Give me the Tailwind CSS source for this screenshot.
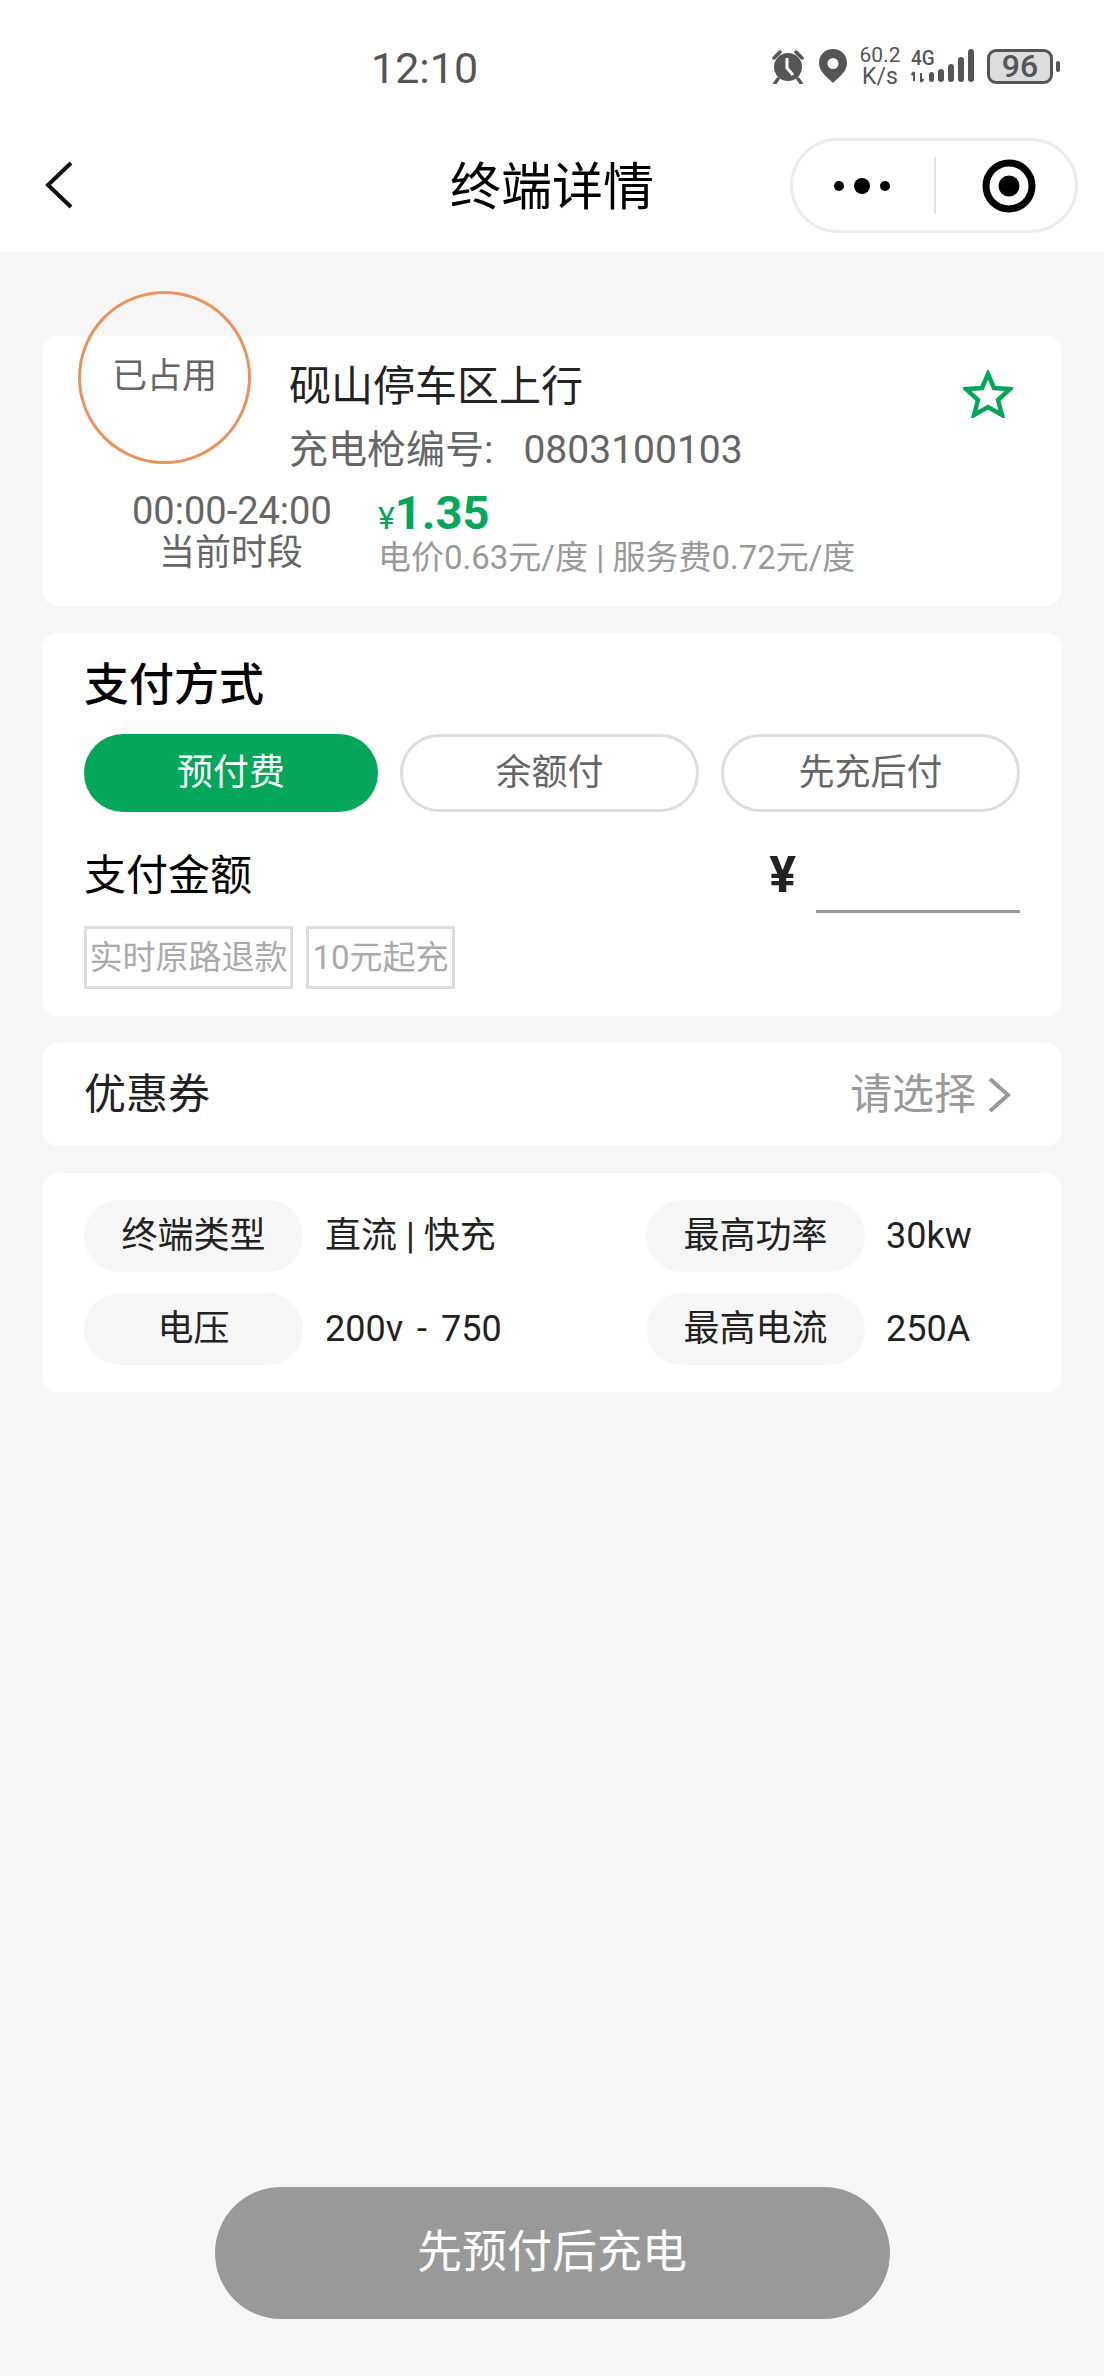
<!DOCTYPE html>
<html lang="zh-CN">
<head>
  <meta charset="UTF-8">
  <meta name="viewport" content="width=device-width, initial-scale=1.0">
  <title>终端详情</title>
  <script src="https://cdn.jsdelivr.net/npm/@tailwindcss/browser@4"></script>
</head>
<body class="bg-[#f6f6f6] font-['Roboto','Noto_Sans_CJK_SC',sans-serif] w-[1104px] h-[2376px] flex flex-col overflow-hidden">
  <!-- header -->
  <header class="bg-white h-[252px] shrink-0">
    <div class="h-[138px] flex items-start pt-[46px]">
      <div class="ml-[371px] text-[43px] leading-[44px] text-[#555]">12:10</div>
      <div class="ml-auto mr-[44px] flex items-center text-[#555] h-[40px]">
        <svg class="w-[36px] h-[36px]" viewBox="0 0 36 36" fill="#555">
          <circle cx="18" cy="19" r="14"/>
          <path d="M4 10 L10 4 M32 10 L26 4 M8 31 L5 35 M28 31 L31 35" stroke="#555" stroke-width="3.5" stroke-linecap="round"/>
          <path d="M17 10 V20 L23 27" stroke="#fff" stroke-width="3" fill="none"/>
        </svg>
        <svg class="w-[28px] h-[34px] ml-[13px]" viewBox="0 0 28 34" fill="#555">
          <path fill-rule="evenodd" d="M14 0 C6 0 0 6 0 14 C0 23 9 29 14 34 C19 29 28 23 28 14 C28 6 22 0 14 0 Z M14 9 A5.5 5.5 0 1 1 14 20 A5.5 5.5 0 1 1 14 9 Z"/>
        </svg>
        <div class="ml-[11px] w-[44px] flex flex-col items-center font-['Roboto',sans-serif]">
          <span class="text-[21px] leading-[21px]">60.2</span>
          <span class="text-[23px] leading-[21px]">K/s</span>
        </div>
        <div class="relative ml-[9px] w-[64px] h-[36px]">
          <svg class="w-[64px] h-[36px]" viewBox="0 0 64 36" fill="#555">
            <rect x="18" y="24" width="5" height="10" rx="2.5"/>
            <rect x="27" y="21" width="6" height="13" rx="3"/>
            <rect x="37" y="16" width="6" height="18" rx="3"/>
            <rect x="47" y="9" width="6" height="25" rx="3"/>
            <rect x="57" y="1" width="6" height="33" rx="3"/>
            <path d="M3 24 V33 M3 24 L0.5 27 M10 34 V25 M10 34 L12.5 31" stroke="#555" stroke-width="2" fill="none"/>
          </svg>
          <span class="absolute left-0 top-0 text-[21px] leading-[20px] font-medium scale-x-90 origin-left">4G</span>
        </div>
        <div class="ml-[12px] w-[66px] h-[35px] rounded-[9px] border-[3px] border-[#555] bg-[#dcdcdc] flex items-center justify-center text-[32px] leading-none font-medium">96</div>
        <div class="ml-[3px] w-[4px] h-[11px] rounded-full bg-[#555]"></div>
      </div>
    </div>
    <div class="h-[114px] grid grid-cols-[1fr_auto_1fr] items-start">
      <div class="pl-[44px] pt-[23px]">
        <svg class="w-[30px] h-[48px]" viewBox="0 0 30 48" fill="none" stroke="#111" stroke-width="4">
          <path d="M27 2 L4 24 L27 46"/>
        </svg>
      </div>
      <h1 class="text-[51px] leading-[100px] text-black">终端详情</h1>
      <div class="flex justify-end pr-[26px]">
        <div class="w-[288px] h-[95px] rounded-full border-[3px] border-[#ebebeb] flex items-center">
          <svg class="ml-[40px] w-[58px] h-[20px]" viewBox="0 0 58 20" fill="#000">
            <circle cx="6" cy="10" r="5"/><circle cx="29" cy="10" r="8"/><circle cx="52" cy="10" r="5"/>
          </svg>
          <div class="ml-[43px] w-[2px] h-[57px] bg-[#e2e2e2]"></div>
          <svg class="ml-[46px] w-[54px] h-[54px]" viewBox="0 0 54 54">
            <circle cx="27" cy="27" r="23" fill="none" stroke="#000" stroke-width="7"/>
            <circle cx="27" cy="27" r="10.5" fill="#000"/>
          </svg>
        </div>
      </div>
    </div>
  </header>

  <main class="px-[42px] pt-[84px] flex flex-col gap-[27px]">
    <!-- station card -->
    <section class="relative h-[270px] bg-white rounded-[16px]">
      <div class="absolute left-[36px] -top-[45px] w-[173px] h-[173px] rounded-full border-[3px] border-[#e8925c] flex items-center justify-center text-[35px] text-[#666]">已占用</div>
      <div class="flex justify-between pl-[247px] pt-[26px] pr-[49px]">
        <div>
          <div class="text-[42px] leading-[50px] text-[#222]">砚山停车区上行</div>
          <div class="mt-[13px] text-[39px] leading-[50px] text-[#666]">充电枪编号:<span class="ml-[30px]">0803100103</span></div>
        </div>
        <svg class="mt-[8px] w-[50px] h-[48px]" viewBox="0 0 50 48" fill="none" stroke="#04a65a" stroke-width="4.5" stroke-linejoin="miter">
          <path d="M25 4 L31 18 L47 19 L35 30 L39 45 L25 37 L11 45 L15 30 L3 19 L19 18 Z"/>
        </svg>
      </div>
      <div class="mt-[15px] flex pl-[90px]">
        <div class="w-[198px] text-center leading-[42px] text-[#666] whitespace-nowrap">
          <div class="text-[38px]">00:00-24:00</div>
          <div class="text-[36px]">当前时段</div>
        </div>
        <div class="ml-[48px]">
          <div class="h-[46px] leading-[46px] text-[#04a65a] font-bold text-[47px]"><span class="text-[32px] font-normal">¥</span>1.35</div>
          <div class="text-[33px] leading-[44px] text-[#999]">电价0.63元/度 | 服务费0.72元/度</div>
        </div>
      </div>
    </section>

    <!-- payment card -->
    <section class="bg-white rounded-[16px] px-[42px] pt-[25px] pb-[27px]">
      <h2 class="text-[45px] leading-[56px] font-medium text-black">支付方式</h2>
      <div class="mt-[20px] flex gap-[22px]">
        <button class="w-[294px] h-[78px] rounded-full bg-[#04a65a] text-white text-[36px]">预付费</button>
        <button class="w-[299px] h-[78px] rounded-full border-[3px] border-[#ddd] text-[#666] text-[36px]">余额付</button>
        <button class="w-[299px] h-[78px] rounded-full border-[3px] border-[#ddd] text-[#666] text-[36px]">先充后付</button>
      </div>
      <div class="mt-[36px] flex justify-between h-[66px]">
        <div class="pt-[3px] text-[42px] leading-[50px] text-black">支付金额</div>
        <div class="flex items-start">
          <span class="text-[50px] leading-[54px] font-bold text-[#222]">¥</span>
          <input class="ml-[20px] w-[204px] h-[65px] border-b-[3px] border-[#999] outline-none" type="text">
        </div>
      </div>
      <div class="mt-[12px] flex gap-[13px]">
        <span class="w-[209px] h-[63px] border-[3px] border-[#ddd] flex items-center justify-center text-[33px] text-[#aaa] whitespace-nowrap">实时原路退款</span>
        <span class="w-[149px] h-[63px] border-[3px] border-[#ddd] flex items-center justify-center text-[33px] text-[#aaa] whitespace-nowrap">10元起充</span>
      </div>
    </section>

    <!-- coupon -->
    <section class="bg-white rounded-[16px] h-[103px] pl-[42px] pr-[51px] flex items-center justify-between">
      <span class="text-[42px] text-[#222]">优惠券</span>
      <div class="flex items-center text-[42px] text-[#999]">
        请选择
        <svg class="ml-[12px] w-[23px] h-[34px]" viewBox="0 0 23 34" fill="none" stroke="#999" stroke-width="4">
          <path d="M2 1 L20 17 L2 33"/>
        </svg>
      </div>
    </section>

    <!-- terminal spec -->
    <section class="bg-white rounded-[16px] px-[42px] py-[27px] grid grid-cols-[562px_1fr] gap-y-[21px] text-[36px] text-[#222]">
      <div class="flex items-center"><span class="w-[219px] h-[72px] rounded-full bg-[#f6f6f6] flex items-center justify-center">终端类型</span><span class="ml-[22px]">直流 | 快充</span></div>
      <div class="flex items-center"><span class="w-[219px] h-[72px] rounded-full bg-[#f6f6f6] flex items-center justify-center">最高功率</span><span class="ml-[21px]">30kw</span></div>
      <div class="flex items-center"><span class="w-[219px] h-[72px] rounded-full bg-[#f6f6f6] flex items-center justify-center">电压</span><span class="ml-[22px]">200v <span class="mx-[5px]">-</span> 750</span></div>
      <div class="flex items-center"><span class="w-[219px] h-[72px] rounded-full bg-[#f6f6f6] flex items-center justify-center">最高电流</span><span class="ml-[21px]">250A</span></div>
    </section>
  </main>

  <footer class="mt-auto mb-[57px] flex justify-center">
    <button class="w-[675px] h-[132px] rounded-full bg-[#999] text-white text-[45px]">先预付后充电</button>
  </footer>
</body>
</html>
